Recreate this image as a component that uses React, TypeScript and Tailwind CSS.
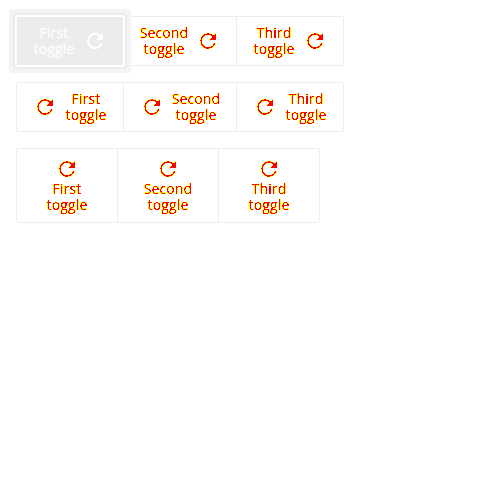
import React from "react";

function RefreshIcon({ active }: { active: boolean }) {
  return (
    <svg viewBox="0 0 24 24" className={`block size-6 shrink-0 fill-current ${active ? "" : "[filter:url(#duotone-icon)]"}`} aria-hidden="true">
      <path d="M17.65 6.35A7.96 7.96 0 0 0 12 4a8 8 0 1 0 7.73 10h-2.08A6 6 0 1 1 12 6c1.66 0 3.14.69 4.22 1.78L13 11h7V4l-2.35 2.35z" />
    </svg>
  );
}

function Toggle({ name, box, content, active = false }: { name: string; box: string; content: string; active?: boolean }) {
  return (
    <button
      className={`flex shrink-0 items-center justify-center border-[#ededed] ${box} ${
        active ? "relative z-10 mr-px bg-[#ececec] text-white shadow-[0_0_0_2px_#fff,0_0_0_4px_#ececec,0_0_0_8px_#f4f4f4]" : "bg-white text-black"
      }`}
    >
      <span className={`flex items-center ${content}`}>
        <span className={`min-w-[41.5px] text-center text-[14px] leading-4 font-medium tracking-[0.13px] [-webkit-text-stroke:0.2px] ${active ? "" : "[filter:url(#duotone-text)]"}`}>
          <span className="block">{name}</span>
          <span className="block">toggle</span>
        </span>
        <RefreshIcon active={active} />
      </span>
    </button>
  );
}

export default function App() {
  const outer = "flex rounded-[2px] border border-[#ededed]";
  return (
    <main className="h-[500px] w-[500px] bg-white p-4 font-['Open_Sans',sans-serif]">
      <svg className="absolute size-0" aria-hidden="true">
        <filter id="duotone-text" colorInterpolationFilters="sRGB">
          <feColorMatrix values="0 0 0 0 1  0 0 0 1 0  0 0 0 0 0  0 0 0 1 0" />
          <feComponentTransfer>
            <feFuncG type="discrete" tableValues="1 1 1 1 1 1 0 0 0 0" />
            <feFuncA type="discrete" tableValues="0 0 1 1 1 1 1 1 1 1" />
          </feComponentTransfer>
        </filter>
        <filter id="duotone-icon" colorInterpolationFilters="sRGB">
          <feColorMatrix values="0 0 0 0 1  0 0 0 1 0  0 0 0 0 0  0 0 0 1 0" />
          <feComponentTransfer>
            <feFuncG type="discrete" tableValues="1 1 1 1 1 1 1 1 1 0" />
            <feFuncA type="discrete" tableValues="0 0 0 0 1 1 1 1 1 1" />
          </feComponentTransfer>
        </filter>
      </svg>
      <div className={`${outer} h-[50px] w-[328px]`}>
        <Toggle name="First" box="w-[106px] rounded-[1px]" content="gap-2" active />
        <Toggle name="Second" box="w-[113px] border-r" content="gap-2" />
        <Toggle name="Third" box="w-[106px]" content="gap-2" />
      </div>
      <div className={`${outer} mt-4 h-[50px] w-[328px]`}>
        <Toggle name="First" box="w-[107px] border-r" content="flex-row-reverse gap-2" />
        <Toggle name="Second" box="w-[113px] border-r" content="flex-row-reverse gap-2" />
        <Toggle name="Third" box="w-[106px]" content="flex-row-reverse gap-2" />
      </div>
      <div className={`${outer} mt-4 h-[75px] w-[304px]`}>
        <Toggle name="First" box="w-[101px] border-r" content="flex-col-reverse pb-px" />
        <Toggle name="Second" box="w-[101px] border-r" content="flex-col-reverse pb-px" />
        <Toggle name="Third" box="w-[100px]" content="flex-col-reverse pb-px" />
      </div>
    </main>
  );
}
